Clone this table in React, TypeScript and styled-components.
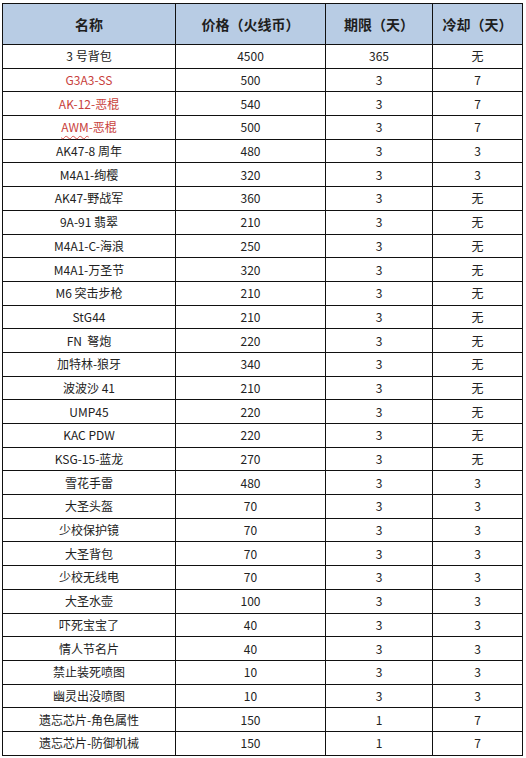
import React from 'react'
import styled, { createGlobalStyle } from 'styled-components'

const GlobalStyle = createGlobalStyle`
    html, body {
        margin: 0;
        padding: 0;
        background: #ffffff;
    }
    body {
        font-family: 'Liberation Sans', 'Noto Sans CJK SC', sans-serif;
    }
`

type Item = {
    name: string
    price: number
    term: string
    cooldown: string
    red?: boolean
}

const items: Item[] = [
    { name: '3 号背包', price: 4500, term: '365', cooldown: '无' },
    { name: 'G3A3-SS', price: 500, term: '3', cooldown: '7', red: true },
    { name: 'AK-12-恶棍', price: 540, term: '3', cooldown: '7', red: true },
    { name: 'AWM-恶棍', price: 500, term: '3', cooldown: '7', red: true },
    { name: 'AK47-8 周年', price: 480, term: '3', cooldown: '3' },
    { name: 'M4A1-绚樱', price: 320, term: '3', cooldown: '3' },
    { name: 'AK47-野战军', price: 360, term: '3', cooldown: '无' },
    { name: '9A-91 翡翠', price: 210, term: '3', cooldown: '无' },
    { name: 'M4A1-C-海浪', price: 250, term: '3', cooldown: '无' },
    { name: 'M4A1-万圣节', price: 320, term: '3', cooldown: '无' },
    { name: 'M6 突击步枪', price: 210, term: '3', cooldown: '无' },
    { name: 'StG44', price: 210, term: '3', cooldown: '无' },
    { name: 'FN  弩炮', price: 220, term: '3', cooldown: '无' },
    { name: '加特林-狼牙', price: 340, term: '3', cooldown: '无' },
    { name: '波波沙 41', price: 210, term: '3', cooldown: '无' },
    { name: 'UMP45', price: 220, term: '3', cooldown: '无' },
    { name: 'KAC PDW', price: 220, term: '3', cooldown: '无' },
    { name: 'KSG-15-蓝龙', price: 270, term: '3', cooldown: '无' },
    { name: '雪花手雷', price: 480, term: '3', cooldown: '3' },
    { name: '大圣头盔', price: 70, term: '3', cooldown: '3' },
    { name: '少校保护镜', price: 70, term: '3', cooldown: '3' },
    { name: '大圣背包', price: 70, term: '3', cooldown: '3' },
    { name: '少校无线电', price: 70, term: '3', cooldown: '3' },
    { name: '大圣水壶', price: 100, term: '3', cooldown: '3' },
    { name: '吓死宝宝了', price: 40, term: '3', cooldown: '3' },
    { name: '情人节名片', price: 40, term: '3', cooldown: '3' },
    { name: '禁止装死喷图', price: 10, term: '3', cooldown: '3' },
    { name: '幽灵出没喷图', price: 10, term: '3', cooldown: '3' },
    { name: '遗忘芯片-角色属性', price: 150, term: '1', cooldown: '7' },
    { name: '遗忘芯片-防御机械', price: 150, term: '1', cooldown: '7' },
]

const Page = styled.div`
    padding: 3px 0 0 2px;
`

const Table = styled.table`
    width: 520px;
    border-collapse: collapse;
    table-layout: fixed;
    border: 1px solid #111;
`

const HeadCell = styled.th`
    height: 40px;
    padding: 0;
    background: #b8cce4;
    border: 1px solid #111;
    color: #1e1e1e;
    font-family: 'Noto Sans CJK SC', sans-serif;
    font-size: 14px;
    font-weight: 700;
    text-align: center;
    vertical-align: middle;
`

const Row = styled.tr`
    height: 23.7px;
`

const Cell = styled.td<{ $red?: boolean }>`
    padding: 0;
    border: 1px solid #111;
    color: ${p => (p.$red ? '#c8413c' : '#222')};
    font-family: 'Noto Sans CJK SC', sans-serif;
    font-size: 12px;
    line-height: 14px;
    text-align: center;
    vertical-align: middle;
    white-space: pre;
`

const Squiggle = styled.span`
    text-decoration: underline wavy #d8504a;
    text-decoration-thickness: 1px;
    text-underline-offset: 3px;
`

const renderName = (item: Item) => {
    // the screenshot shows a spell-check squiggle under "AWM"
    if (item.name.startsWith('AWM')) {
        return (
            <>
                <Squiggle>AWM</Squiggle>
                {item.name.slice(3)}
            </>
        )
    }
    return item.name
}

export default function App() {
    return (
        <Page>
            <GlobalStyle />
            <Table>
                <colgroup>
                    <col style={{ width: 173 }} />
                    <col style={{ width: 150 }} />
                    <col style={{ width: 107 }} />
                    <col style={{ width: 90 }} />
                </colgroup>
                <thead>
                    <tr>
                        <HeadCell>名称</HeadCell>
                        <HeadCell>价格（火线币）</HeadCell>
                        <HeadCell>期限（天）</HeadCell>
                        <HeadCell>冷却（天）</HeadCell>
                    </tr>
                </thead>
                <tbody>
                    {items.map(item => (
                        <Row key={item.name}>
                            <Cell $red={item.red}>{renderName(item)}</Cell>
                            <Cell>{item.price}</Cell>
                            <Cell>{item.term}</Cell>
                            <Cell>{item.cooldown}</Cell>
                        </Row>
                    ))}
                </tbody>
            </Table>
        </Page>
    )
}
